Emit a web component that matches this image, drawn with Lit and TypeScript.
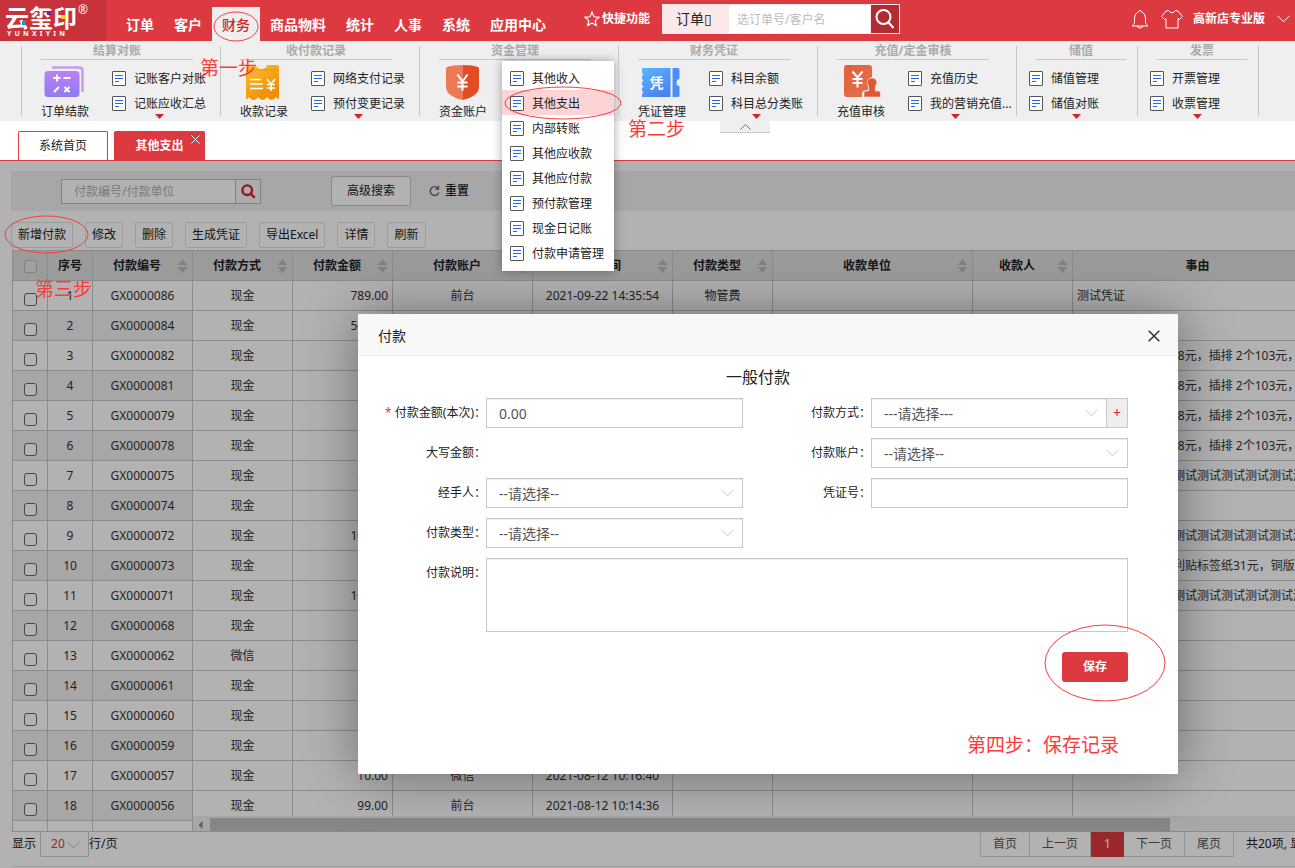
import { LitElement, html, svg, css, nothing } from "lit";
import { customElement, property } from "lit/decorators.js";
import { classMap } from "lit/directives/class-map.js";

interface Group {
  title: string;
  main?: { label: string; icon: string };
  items: string[];
  more: boolean;
  menu?: string[];
}

const NAV = ["订单", "客户", "财务", "商品物料", "统计", "人事", "系统", "应用中心"];

const GROUPS: Group[] = [
  { title: "结算对账", main: { label: "订单结款", icon: "calc" }, items: ["记账客户对账", "记账应收汇总"], more: true },
  { title: "收付款记录", main: { label: "收款记录", icon: "receipt" }, items: ["网络支付记录", "预付变更记录"], more: true },
  {
    title: "资金管理",
    main: { label: "资金账户", icon: "shield" },
    items: [],
    more: false,
    menu: ["其他收入", "其他支出", "内部转账", "其他应收款", "其他应付款", "预付款管理", "现金日记账", "付款申请管理"],
  },
  { title: "财务凭证", main: { label: "凭证管理", icon: "ticket" }, items: ["科目余额", "科目总分类账"], more: true },
  { title: "充值/定金审核", main: { label: "充值审核", icon: "stamp" }, items: ["充值历史", "我的营销充值..."], more: true },
  { title: "储值", items: ["储值管理", "储值对账"], more: true },
  { title: "发票", items: ["开票管理", "收票管理"], more: true },
];

const TOOLS = ["新增付款", "修改", "删除", "生成凭证", "导出Excel", "详情", "刷新"];

const COLUMNS = [
  { label: "付款编号", sort: true },
  { label: "付款方式", sort: true },
  { label: "付款金额", sort: true },
  { label: "付款账户", sort: true },
  { label: "付款时间", sort: true },
  { label: "付款类型", sort: true },
  { label: "收款单位", sort: true },
  { label: "收款人", sort: true },
  { label: "事由", sort: false },
];

const MOUSE = "购买办公用鼠标 148元，插排 2个103元，键盘";
const TEST = "测试测试测试测试测试测试测试测试测试测试";

const ROWS: string[][] = [
  ["GX0000086", "现金", "789.00", "前台", "2021-09-22 14:35:54", "物管费", "测试凭证"],
  ["GX0000084", "现金", "500.00", "前台", "2021-09-16 10:20:11", "物管费", ""],
  ["GX0000082", "现金", "51.00", "前台", "2021-09-14 16:02:37", "办公费", MOUSE],
  ["GX0000081", "现金", "51.00", "前台", "2021-09-14 15:58:20", "办公费", MOUSE],
  ["GX0000079", "现金", "51.00", "前台", "2021-09-14 15:40:09", "办公费", MOUSE],
  ["GX0000078", "现金", "51.00", "前台", "2021-09-14 15:31:46", "办公费", MOUSE],
  ["GX0000075", "现金", "20.00", "前台", "2021-09-10 11:12:05", "其他", TEST],
  ["GX0000074", "现金", "9.00", "前台", "2021-09-10 11:08:51", "其他", ""],
  ["GX0000072", "现金", "100.00", "前台", "2021-09-08 09:45:30", "其他", TEST],
  ["GX0000073", "现金", "31.00", "前台", "2021-09-08 09:51:12", "办公费", "购买了办公用品便利贴标签纸31元，铜版纸"],
  ["GX0000071", "现金", "100.00", "前台", "2021-09-07 17:20:18", "其他", TEST],
  ["GX0000068", "现金", "9.00", "前台", "2021-09-02 14:16:33", "", ""],
  ["GX0000062", "微信", "9.00", "微信", "2021-08-26 10:37:02", "", ""],
  ["GX0000061", "现金", "20.00", "前台", "2021-08-25 16:44:27", "", ""],
  ["GX0000060", "现金", "9.00", "前台", "2021-08-20 11:30:15", "", ""],
  ["GX0000059", "现金", "9.00", "前台", "2021-08-18 09:22:48", "", ""],
  ["GX0000057", "现金", "10.00", "微信", "2021-08-12 10:16:40", "", ""],
  ["GX0000056", "现金", "99.00", "前台", "2021-08-12 10:14:36", "", ""],
  ["GX0000055", "现金", "66.00", "前台", "2021-08-12 10:10:02", "", ""],
];

const base = css`
  *,
  *::before,
  *::after {
    box-sizing: border-box;
  }
  button,
  input,
  select,
  textarea {
    font: inherit;
    color: inherit;
    margin: 0;
    outline: none;
    border-radius: 0;
  }
  button {
    cursor: pointer;
    padding: 0;
  }
  a {
    color: inherit;
    text-decoration: none;
  }
  svg {
    display: block;
    flex: none;
  }
`;

const chevron = html`<svg class="chevron" width="13" height="8" viewBox="0 0 13 8" fill="none" stroke="currentColor">
  <path d="M.5 .8 6.5 6.8 12.5 .8" />
</svg>`;

const docIcon = html`<svg width="14" height="15" viewBox="0 0 14 15" fill="none">
  <rect x=".5" y=".5" width="13" height="14" rx=".5" fill="#fff" stroke="#555" />
  <path d="M3 4.5h8M3 7.5h8M3 10.5h4" stroke="#2468f2" />
</svg>`;

const bigIcons: Record<string, unknown> = {
  calc: svg`
    <defs><linearGradient id="p" x1="0" y1="0" x2="0" y2="1"><stop offset="0" stop-color="#bb80f5"/><stop offset="1" stop-color="#8f7cf0"/></linearGradient></defs>
    <path d="M8 2.500h27q3.500 0 3.500 3.500v21" fill="none" stroke="#c49cf5" stroke-width="2.500"/>
    <rect x="0.500" y="6" width="35" height="26" rx="3.500" fill="url(#p)"/>
    <path d="M9.500 13h7M13 9.500v7M19.500 13h7M10 27l5-5M20.500 22l5 5M25.500 22l-5 5" stroke="#fff" stroke-width="2" fill="none"/>`,
  receipt: svg`
    <defs><linearGradient id="o" x1="0" y1="0" x2="0.600" y2="1"><stop offset="0" stop-color="#fbc02f"/><stop offset="1" stop-color="#f08c00"/></linearGradient></defs>
    <path d="M3 2q0-2 2-2h8q1 4 5.500 4T24 0h10q2 0 2 2v32q-2 0-3-2-2 3-4.500 3T24 32q-2 3-4.500 3T15 32q-2 3-4.500 3T6 32q-1 2-3 2z" fill="url(#o)"/>
    <path d="M3 5h33" stroke="#d98200" stroke-width="1" opacity=".35"/>
    <path d="M7 14.500h11M7 19h13M7 23.500h13" stroke="#fff" stroke-width="1.600"/>
    <path d="M24 14l4 5 4-5M28 19v7M24 19.500h8M24 23h8" stroke="#fff" stroke-width="1.600" fill="none"/>`,
  shield: svg`
    <path d="M20.500 0Q10 0 5 2q-1 .5-1 2v18q0 9 16.500 13z" fill="#ee7a55"/>
    <path d="M20.500 0Q31 0 36 2q1 .5 1 2v18q0 9-16.500 13z" fill="#e04c24"/>
    <path d="M15.500 9.500l5 7 5-7M20.500 16.500v9M15.500 17.500h10M15.500 21.500h10" stroke="#fff" stroke-width="2" fill="none"/>`,
  ticket: svg`
    <defs><linearGradient id="b" x1="0" y1="0" x2=".6" y2="1"><stop offset="0" stop-color="#5bb6fb"/><stop offset="1" stop-color="#4a83f7"/></linearGradient></defs>
    <path d="M1 3h28.500v29H1v-3l1.500-1.500L1 26v-3l1.500-1.500L1 20v-3l1.500-1.500L1 14v-3l1.500-1.500L1 8z" fill="url(#b)"/>
    <path d="M31.500 3H37q1.500 0 1.500 1.500V14q-3 0-3 3.500t3 3.500v9.500q0 1.500-1.500 1.500h-5.500z" fill="#4c8df8"/>
    <text x="15.500" y="23" text-anchor="middle" font-size="14" font-weight="700" fill="#fff">凭</text>`,
  stamp: svg`
    <defs><linearGradient id="s" x1="0" y1="0" x2="1" y2="1"><stop offset="0" stop-color="#e0603c"/><stop offset="1" stop-color="#e8714e"/></linearGradient></defs>
    <path d="M7 0h22q3 0 3 3v9q-5 2-4.500 7 1 3 .5 6-6 0-6 4v3H7q-3 0-3-3V3q0-3 3-3z" fill="url(#s)"/>
    <path d="M32 13a4.500 4.500 0 0 1 4 7q-1.500 2.500-.5 6h3.500q1.500 0 1.500 2v4H24v-4q0-2 1.500-2h3q1-3.500-.5-6a4.500 4.500 0 0 1 4-7z" fill="#e0582f" stroke="#efefef" stroke-width=".6"/>
    <path d="M12.500 6.500l5 6 5-6M17.500 12.500v10M12.500 14h10M12.500 18h10" stroke="#fff" stroke-width="2" fill="none"/>`,
};

@customElement("app-ribbon")
class AppRibbon extends LitElement {
  static styles = [
    base,
    css`
      :host {
        display: flex;
        height: 80px;
        padding: 5px 0 5px 21px;
        background: #efefef;
        font-size: 12px;
        line-height: 16px;
        color: #222;
      }
      .group {
        position: relative;
        flex: 0 0 199px;
        border-left: 1px solid #c8c8c8;
        white-space: nowrap;
      }
      .narrow {
        flex-basis: 121px;
      }
      .end {
        flex: 1;
      }
      .title {
        margin: 0 27px 0 19px;
        padding-bottom: 3px;
        border-bottom: 1px solid #c8c8c8;
        font-size: 12px;
        line-height: 10px;
        text-align: center;
        color: #aaa;
      }
      .narrow .title {
        margin-right: 11px;
      }
      .body {
        display: grid;
        grid-template-columns: 48px 1fr;
        column-gap: 23px;
        padding-left: 19px;
      }
      .narrow .body {
        grid-template-columns: 1fr;
        padding-left: 12px;
      }
      .main {
        padding-top: 5px;
      }
      .main svg {
        margin: 0 3px 3px;
        font-family: "Noto Sans CJK SC", sans-serif;
      }
      .list {
        position: relative;
        padding-top: 5px;
      }
      .item {
        display: flex;
        align-items: center;
        gap: 8px;
        height: 25px;
        padding-top: 2px;
      }
      .more {
        position: absolute;
        left: 43px;
        top: 54px;
        width: 9px;
        height: 5px;
        border: 0;
        background: #d3222b;
        clip-path: polygon(0 0, 100% 0, 50% 100%);
      }
      .menu {
        position: absolute;
        left: 82px;
        top: 15px;
        width: 112px;
        padding: 4px 0 6px;
        background: #fff;
        box-shadow: 0 0 10px rgba(0, 0, 0, 0.35);
      }
      .menu .item {
        padding-left: 8px;
      }
      .active {
        background: #fdd3d5;
      }
    `,
  ];

  render() {
    return html`
      ${GROUPS.map(
        (g) => html`<section class=${classMap({ group: true, narrow: !g.main })}>
          <h3 class="title">${g.title}</h3>
          <div class="body">
            ${g.main
              ? html`<a class="main" href="#">
                  <svg width="41" height="36" viewBox="0 0 41 36">${bigIcons[g.main.icon]}</svg>
                  ${g.main.label}
                </a>`
              : nothing}
            <div class="list">
              ${g.items.map((i) => html`<a class="item" href="#">${docIcon}<span>${i}</span></a>`)}
              ${g.more ? html`<button class="more" aria-label="更多"></button>` : nothing}
            </div>
          </div>
          ${g.menu
            ? html`<nav class="menu">
                ${g.menu.map(
                  (m) => html`<a class=${classMap({ item: true, active: m === "其他支出" })} href="#">${docIcon}<span>${m}</span></a>`
                )}
              </nav>`
            : nothing}
        </section>`
      )}
      <div class="group end"></div>
    `;
  }
}

@customElement("pay-table")
class PayTable extends LitElement {
  static styles = [
    base,
    css`
      :host {
        display: block;
        position: relative;
        overflow: hidden;
        border: 1px solid #c8c8c8;
        border-right: 0;
      }
      .grid {
        table-layout: fixed;
        width: 1310px;
        border-collapse: separate;
        border-spacing: 0;
        font-size: 12px;
        line-height: 16px;
        color: #333;
      }
      .c-box { width: 35px; }
      .c-no { width: 45px; }
      .c-100 { width: 100px; }
      .c-140 { width: 140px; }
      .c-200 { width: 200px; }
      .c-250 { width: 250px; }
      th,
      td {
        height: 30px;
        padding: 0 4px;
        border-right: 1px solid #c8c8c8;
        border-bottom: 1px solid #c8c8c8;
        text-align: center;
        white-space: nowrap;
        overflow: hidden;
      }
      th {
        background: #dfdfdf;
        color: #222;
      }
      .head {
        display: grid;
        grid-template-columns: 1fr 11px;
        align-items: center;
      }
      .head svg {
        color: #bbb;
      }
      .striped {
        background: #efefef;
      }
      .num {
        text-align: right;
      }
      .text {
        text-align: left;
      }
      .box {
        display: block;
        appearance: none;
        width: 13px;
        height: 13px;
        margin: 8px auto 0;
        border: 1px solid #666;
        border-radius: 3px;
        background: #fff;
      }
      .all {
        margin-top: 2px;
        border-color: #bbb;
        background: #e6e6e6;
      }
      .bar {
        position: absolute;
        left: 180px;
        right: 0;
        bottom: 0;
        height: 15px;
        padding: 2px 0 0 5px;
        display: flex;
        align-items: center;
        background: #efefef;
        color: #888;
      }
      .thumb {
        align-self: stretch;
        width: 87.5%;
        margin-left: 7px;
        background: #c0c0c0;
      }
    `,
  ];

  render() {
    return html`
      <table class="grid">
        <colgroup>
          <col class="c-box" /><col class="c-no" /><col class="c-100" /><col class="c-100" /><col class="c-100" />
          <col class="c-140" /><col class="c-140" /><col class="c-100" /><col class="c-200" /><col class="c-100" /><col class="c-250" />
        </colgroup>
        <thead>
          <tr>
            <th><input class="box all" type="checkbox" aria-label="全选" /></th>
            <th>序号</th>
            ${COLUMNS.map(
              (c) => html`<th>
                ${c.sort
                  ? html`<span class="head">${c.label}<svg width="11" height="14" viewBox="0 0 11 14" fill="currentColor">
                        <path d="M5.500 0 10.500 6H.5zM5.500 14 .5 8h10z" /></svg></span>`
                  : c.label}
              </th>`
            )}
          </tr>
        </thead>
        <tbody>
          ${ROWS.map((r, i) => {
            const s = i % 2 ? "striped" : "";
            return html`<tr>
              <td class=${s}><input class="box" type="checkbox" aria-label="选择 ${r[0]}" /></td>
              <td class=${s}>${i + 1}</td>
              <td class=${s}>${r[0]}</td>
              <td>${r[1]}</td>
              <td class="num">${r[2]}</td>
              <td>${r[3]}</td>
              <td>${r[4]}</td>
              <td>${r[5]}</td>
              <td></td>
              <td></td>
              <td class="text">${r[6]}</td>
            </tr>`;
          })}
        </tbody>
      </table>
      <div class="bar">
        <svg width="5" height="8" viewBox="0 0 5 8" fill="currentColor"><path d="M4.500 0v8L.5 4z" /></svg>
        <div class="thumb"></div>
      </div>
    `;
  }
}

@customElement("pay-dialog")
class PayDialog extends LitElement {
  static styles = [
    base,
    css`
      :host {
        display: block;
        background: #fff;
        box-shadow: 1px 1px 50px rgba(0, 0, 0, 0.4);
        font-size: 12px;
        line-height: 16px;
        color: #222;
      }
      .head {
        display: flex;
        align-items: center;
        justify-content: space-between;
        height: 42px;
        padding: 2px 18px 0 20px;
        background: #f8f8f8;
        border-bottom: 1px solid #eee;
      }
      .name {
        margin: 0;
        font-size: 14px;
        font-weight: 400;
        line-height: 20px;
      }
      .close {
        border: 0;
        background: none;
      }
      .form {
        display: grid;
        grid-template-columns: 128px 1fr 128px 1fr;
        grid-template-rows: 22px repeat(4, 30px) 74px 40px;
        row-gap: 10px;
        padding: 10px 50px 92px 0;
      }
      .title {
        grid-column: 1 / -1;
        margin: 0 0 0 30px;
        font-size: 16px;
        font-weight: 400;
        line-height: 22px;
        text-align: center;
      }
      .label {
        text-align: right;
        line-height: 30px;
        white-space: nowrap;
      }
      .star {
        color: #f33;
      }
      .right {
        grid-column: 3;
      }
      .field {
        display: flex;
        position: relative;
        min-width: 0;
        height: 30px;
        border: 1px solid #c8c8c8;
        box-shadow: inset 0 1px 0 #eee;
        color: #555;
        font-size: 14px;
      }
      .input {
        flex: 1;
        min-width: 0;
        appearance: none;
        border: 0;
        padding: 1px 12px 0;
        background: none;
      }
      .chevron {
        position: absolute;
        right: 8px;
        top: 10px;
        color: #c8c8c8;
        pointer-events: none;
      }
      .with-add .chevron {
        right: 29px;
      }
      .add {
        width: 21px;
        border: 0;
        border-left: 1px solid #c8c8c8;
        background: #eee;
        color: #e3222b;
      }
      .area {
        grid-column: 2 / -1;
        height: 74px;
      }
      .area .input {
        resize: none;
        padding: 6px 12px;
      }
      .save {
        grid-column: 4;
        grid-row: 7;
        justify-self: end;
        align-self: end;
        width: 66px;
        height: 30px;
        border: 0;
        border-radius: 3px;
        background: #dd3940;
        color: #fff;
        font-weight: 700;
      }
    `,
  ];

  private select(id: string, text: string, add = false) {
    return html`<div class=${classMap({ field: true, "with-add": add })}>
      <select class="input" id=${id}><option>${text}</option></select>${chevron}
      ${add ? html`<button class="add" type="button" aria-label="新增付款方式">+</button>` : nothing}
    </div>`;
  }

  render() {
    return html`
      <header class="head">
        <h2 class="name">付款</h2>
        <button class="close" aria-label="关闭">
          <svg width="12" height="12" viewBox="0 0 12 12" stroke="#2e2d3c" stroke-width="1.500"><path d="M.7.7l10.600 10.600M11.300.7.7 11.300" /></svg>
        </button>
      </header>
      <form class="form">
        <h3 class="title">一般付款</h3>
        <label class="label" for="amount"><span class="star">*</span> 付款金额(本次)：</label>
        <div class="field"><input class="input" id="amount" value="0.00" /></div>
        <label class="label" for="method">付款方式：</label>
        ${this.select("method", "---请选择---", true)}
        <span class="label">大写金额：</span>
        <label class="label right" for="account">付款账户：</label>
        ${this.select("account", "--请选择--")}
        <label class="label" for="handler">经手人：</label>
        ${this.select("handler", "--请选择--")}
        <label class="label" for="voucher">凭证号：</label>
        <div class="field"><input class="input" id="voucher" /></div>
        <label class="label" for="kind">付款类型：</label>
        ${this.select("kind", "--请选择--")}
        <span class="right"></span><span></span>
        <label class="label" for="note">付款说明：</label>
        <div class="field area"><textarea class="input" id="note"></textarea></div>
        <button class="save" type="button">保存</button>
      </form>
    `;
  }
}

@customElement("app-root")
class AppRoot extends LitElement {
  @property() section = "财务";

  static styles = [
    base,
    css`
      :host {
        display: flex;
        flex-direction: column;
        position: relative;
        height: 100vh;
        overflow: hidden;
        background: #fff;
        font: 12px/16px "Noto Sans", "Noto Sans CJK SC", sans-serif;
        color: #222;
        white-space: nowrap;
      }
      .top {
        display: flex;
        height: 41px;
        background: #dd3940;
        color: #fff;
      }
      .logo {
        position: relative;
        width: 106px;
        padding: 3px 0 0 5px;
        background: #c8323a;
      }
      .brand {
        display: block;
        font: 700 24px/28px "Noto Sans CJK SC", sans-serif;
      }
      .latin {
        display: flex;
        justify-content: space-between;
        width: 58px;
        margin-left: 2px;
        font-size: 7px;
        font-weight: 700;
        line-height: 5px;
      }
      .reg {
        position: absolute;
        left: 78px;
        top: 3px;
        font-size: 12px;
        line-height: 14px;
      }
      .dots {
        position: absolute;
        left: 0;
        top: 0;
      }
      .nav {
        display: flex;
        padding: 7px 0 0 10px;
        font-size: 14px;
        font-weight: 700;
        line-height: 35px;
      }
      .nav a {
        padding: 0 10px;
      }
      .nav .on {
        background: #efefef;
        color: #c9262e;
        font-weight: 500;
      }
      .quick {
        display: flex;
        align-items: center;
        gap: 2px;
        height: 38px;
        margin-left: 28px;
        font-weight: 700;
      }
      .find {
        display: flex;
        width: 238px;
        height: 30px;
        margin: 4px 0 0 12px;
        border: 1px solid #fbe9ea;
      }
      .find-kind {
        appearance: none;
        width: 66px;
        padding: 0 0 0 13px;
        border: 0;
        background: #fbe9ea;
        color: #222;
        font-size: 14px;
      }
      .find-text {
        flex: 1;
        min-width: 0;
        padding: 2px 8px 0;
        border: 0;
        background: #fff;
        color: #222;
      }
      .find-text::placeholder {
        color: #bbb;
        opacity: 1;
      }
      .find-go {
        display: grid;
        place-items: center;
        width: 29px;
        border: 0;
        border-left: 1px solid #fbe9ea;
        background: #b02b34;
      }
      .user {
        display: flex;
        align-items: center;
        gap: 12px;
        height: 38px;
        margin-left: auto;
        padding-right: 5px;
        font-weight: 700;
      }
      .user .shop {
        margin-left: -2px;
      }
      app-ribbon {
        flex: none;
        position: relative;
        z-index: 3;
      }
      .tabs {
        display: flex;
        align-items: flex-end;
        gap: 6px;
        position: relative;
        height: 40px;
        padding-left: 18px;
        border-bottom: 1px solid #dd3940;
      }
      .tab {
        position: relative;
        width: 90px;
        height: 29px;
        border: 1px solid #dd3940;
        border-bottom: 0;
        border-radius: 2px 2px 0 0;
        text-align: center;
        line-height: 28px;
      }
      .tab.on {
        width: 91px;
        background: #dd3940;
        color: #fff;
        font-weight: 700;
      }
      .tab-x {
        position: absolute;
        right: 4px;
        top: 3px;
      }
      .fold {
        position: absolute;
        left: 720px;
        top: 0;
        display: grid;
        place-items: center;
        width: 50px;
        height: 12px;
        border: 0;
        border-bottom: 1px solid #c8c8c8;
        background: #efefef;
      }
      .main {
        flex: 1;
        min-height: 0;
        display: flex;
        flex-direction: column;
        position: relative;
        padding: 10px 0 0 11px;
      }
      .filter {
        display: flex;
        align-items: center;
        flex: none;
        height: 40px;
        padding-left: 50px;
        background: #efefef;
      }
      .query {
        display: flex;
        width: 200px;
        height: 25px;
        margin-right: 70px;
        border: 1px solid #bbb;
      }
      .query-text {
        flex: 1;
        min-width: 0;
        border: 0;
        padding: 1px 12px 0;
        background: #fff;
      }
      .query-text::placeholder {
        color: #b0b0b0;
        opacity: 1;
      }
      .query-go {
        display: grid;
        place-items: center;
        width: 25px;
        border: 0;
        border-left: 1px solid #bbb;
        background: #f6f6f6;
      }
      .advanced {
        width: 80px;
        height: 30px;
        border: 1px solid #c4c4c4;
        border-radius: 3px;
        background: #fff;
      }
      .reset {
        display: flex;
        align-items: center;
        gap: 5px;
        margin-left: 18px;
        border: 0;
        background: none;
        font-weight: 500;
      }
      .tools {
        display: flex;
        gap: 12px;
        padding: 11px 0 2px;
      }
      .tool {
        height: 26px;
        padding: 0 6px;
        border: 1px solid #e0e0e0;
        border-radius: 2px;
        background: #fff;
      }
      pay-table {
        flex: 1;
        min-height: 0;
        margin-left: 1px;
      }
      .foot {
        display: flex;
        height: 36px;
        margin-left: 1px;
        padding-bottom: 1px;
        line-height: 24px;
      }
      .foot::after {
        content: "";
        position: absolute;
        left: 12px;
        right: 0;
        bottom: 1px;
        border-bottom: 1px solid #e4e4e4;
      }
      .size {
        position: relative;
        width: 49px;
        height: 25px;
        margin-left: 4px;
      }
      .size select {
        appearance: none;
        width: 100%;
        height: 100%;
        padding: 0 10px;
        border: 1px solid #ccc;
        border-top: 0;
        border-radius: 0 0 2px 2px;
        background: #fff;
        color: #dd3940;
      }
      .size .chevron {
        position: absolute;
        right: 9px;
        top: 9px;
        color: #bbb;
      }
      .pages {
        display: flex;
        height: 25px;
        margin-left: auto;
        color: #555;
      }
      .page {
        padding: 0 12px;
        border: 1px solid #d4d4d4;
        border-top: 0;
        border-left-width: 0;
      }
      .page:first-child {
        border-left-width: 1px;
      }
      .page.on {
        border: 0;
        padding: 0 13px;
        background: #dd3940;
        color: #fff;
      }
      .total {
        width: 49px;
        margin-left: 12px;
        overflow: hidden;
      }
      .shade {
        position: absolute;
        inset: 0;
        background: rgba(0, 0, 0, 0.3);
      }
      pay-dialog {
        position: absolute;
        left: 358px;
        top: 153px;
        width: 820px;
      }
      .notes {
        position: absolute;
        inset: 0;
        z-index: 4;
        width: 100%;
        height: 100%;
        pointer-events: none;
        font-size: 19px;
      }
    `,
  ];

  render() {
    return html`
      <header class="top">
        <div class="logo">
          <span class="brand">云玺印</span>
          <span class="latin">${[..."YUNXIYIN"].map((c) => html`<span>${c}</span>`)}</span>
          <span class="reg">®</span>
          <svg class="dots" width="80" height="36" viewBox="0 0 80 36">
            <rect x="22" y="21" width="4" height="4" fill="#1296db" />
            <rect x="47" y="11" width="4" height="4" fill="#7d1f8d" />
            <rect x="61" y="15" width="4" height="4" fill="#ffd400" />
          </svg>
        </div>
        <nav class="nav">
          ${NAV.map((n) => html`<a href="#" class=${classMap({ on: n === this.section })}>${n}</a>`)}
        </nav>
        <a class="quick" href="#">
          <svg width="16" height="16" viewBox="0 0 16 16" fill="none" stroke="#fff" stroke-width="1.200">
            <path d="M8 1.200l2 4.600 5 .5-3.800 3.300 1.200 4.900L8 11.900l-4.400 2.600 1.200-4.900L1 6.300l5-.5z" />
          </svg>
          快捷功能
        </a>
        <form class="find">
          <select class="find-kind" aria-label="搜索类型"><option>订单▯</option></select>
          <input class="find-text" aria-label="搜索" placeholder="选订单号/客户名" />
          <button class="find-go" type="button" aria-label="搜索">
            <svg width="20" height="22" viewBox="0 0 20 22" fill="none" stroke="#fff" stroke-width="2">
              <circle cx="8.500" cy="9" r="7" /><path d="M13.500 14.500l5 5.500" />
            </svg>
          </button>
        </form>
        <div class="user">
          <svg width="18" height="20" viewBox="0 0 18 20" fill="none" stroke="#fff">
            <path d="M7.500 3a1.500 1.500 0 1 1 3 0Q14.500 4.200 14.500 9v4.500q0 1.500 2.500 3.500H1q2.500-2 2.500-3.500V9q0-4.800 4-6zM6.500 17a2.500 2 0 0 0 5 0" />
          </svg>
          <svg width="22" height="20" viewBox="0 0 22 20" fill="none" stroke="#fff">
            <path d="M7.500 1.500Q11 6 14.500 1.500L17 2l4.500 5.500-3 3-1.500-1v9.500H5V9.500l-1.500 1-3-3L5 2z" />
          </svg>
          <span class="shop">高新店专业版</span>
          ${chevron}
        </div>
      </header>

      <app-ribbon></app-ribbon>

      <nav class="tabs">
        <a class="tab" href="#">系统首页</a>
        <a class="tab on" href="#">其他支出
          <svg class="tab-x" width="9" height="9" viewBox="0 0 9 9" stroke="#fff"><path d="M.5.500l8 8M8.500.5l-8 8" /></svg>
        </a>
        <button class="fold" aria-label="收起">
          <svg width="11" height="6" viewBox="0 0 11 6" fill="none" stroke="#dd3940"><path d="M.5 5.500l5-5 5 5" /></svg>
        </button>
      </nav>

      <main class="main">
        <form class="filter">
          <div class="query">
            <input class="query-text" aria-label="付款编号/付款单位" placeholder="付款编号/付款单位" />
            <button class="query-go" type="button" aria-label="查询">
              <svg width="15" height="15" viewBox="0 0 15 15" fill="none" stroke="#d0242c" stroke-width="2.400">
                <circle cx="6.200" cy="6.200" r="4.800" /><path d="M9.800 9.800l4 4" />
              </svg>
            </button>
          </div>
          <button class="advanced" type="button">高级搜索</button>
          <button class="reset" type="reset">
            <svg width="11" height="12" viewBox="0 0 11 12" fill="none" stroke="#666" stroke-width="1.400">
              <path d="M9 3.200A4.400 4.400 0 1 0 9.800 7.500M9.500.8v3.200H6.300" />
            </svg>
            重置
          </button>
        </form>
        <div class="tools">${TOOLS.map((t) => html`<button class="tool">${t}</button>`)}</div>
        <pay-table></pay-table>
        <footer class="foot">
          <label for="size">显示</label>
          <span class="size"><select id="size"><option>20</option></select>${chevron}</span>
          <span>行/页</span>
          <nav class="pages">
            <a class="page" href="#">首页</a><a class="page" href="#">上一页</a><a class="page on" href="#">1</a
            ><a class="page" href="#">下一页</a><a class="page" href="#">尾页</a>
          </nav>
          <span class="total">共20项, 显示1-20项</span>
        </footer>
        <div class="shade"></div>
        <pay-dialog></pay-dialog>
      </main>

      <svg class="notes" fill="none" stroke="#fa3c3c">
        <ellipse cx="236" cy="26.500" rx="22" ry="14.500" />
        <ellipse cx="563" cy="103" rx="58" ry="16" />
        <ellipse cx="46.500" cy="234.500" rx="41.500" ry="18.500" />
        <ellipse cx="1105" cy="663" rx="60" ry="38" />
        <g fill="#fa3c3c" stroke="none">
          <text x="200" y="75">第一步</text>
          <text x="628" y="136">第二步</text>
          <text x="35" y="296">第三步</text>
          <text x="967" y="752">第四步：保存记录</text>
        </g>
      </svg>
    `;
  }
}
